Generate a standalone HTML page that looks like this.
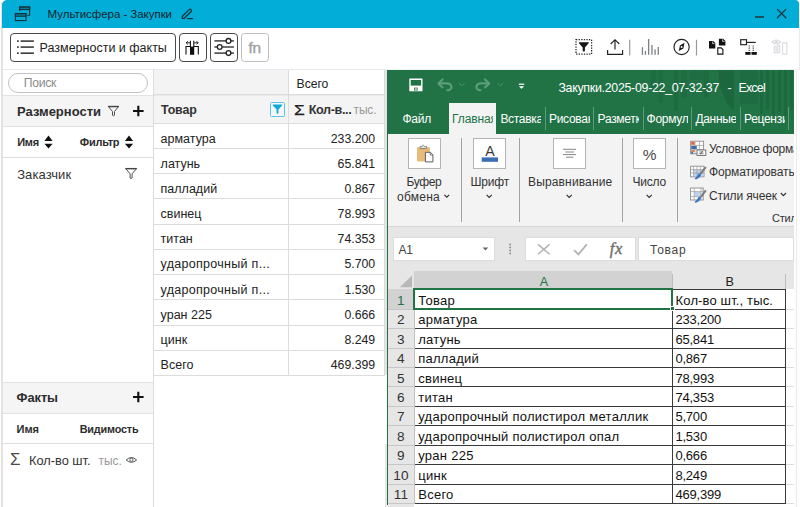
<!DOCTYPE html>
<html lang="ru">
<head>
<meta charset="utf-8">
<title>Мультисфера - Закупки</title>
<style>
*{box-sizing:border-box;margin:0;padding:0}
html,body{width:800px;height:507px;overflow:hidden;background:#fff}
body{font-family:"Liberation Sans","DejaVu Sans",sans-serif;color:#222;position:relative}
#app{position:absolute;left:0;top:0;width:800px;height:507px;overflow:hidden;background:#fff}
.abs{position:absolute}
.t{position:absolute;white-space:nowrap;line-height:1}
/* window */
#edge{left:1px;top:2px;width:1.5px;height:505px;background:#e6e2e2}
#titlebar{left:2px;top:0;width:797px;height:28px;background:#02aed7;border-radius:5px 4px 0 0}
#toolbar{left:3px;top:28px;width:382px;height:41.7px;background:#fff;border-bottom:1px solid #e4eaef}
.btn{position:absolute;top:33px;height:29px;border:1.5px solid #4a4a4a;border-radius:4px;background:#fff}
/* left panel */
#lp{left:3px;top:69.7px;width:150px;height:438px;background:#fff}
.hdr{position:absolute;left:3px;width:150px;background:#f5f5f5;border-top:1px solid #e2e2e2;border-bottom:1px solid #e2e2e2}
</style>
</head>
<body>
<div id="app">
<div id="edge" class="abs"></div>
<div id="titlebar" class="abs"></div>
<div id="toolbar" class="abs"></div>
<div class="abs" style="left:385px;top:68.7px;width:414px;height:1px;background:#eff3f6"></div>
<div class="abs" style="left:799px;top:28px;width:1px;height:479px;background:#e6eef2"></div>
<section id="titlebar-content">
<svg class="abs" style="left:13px;top:5px" width="20" height="18" viewBox="13 5 20 18" fill="none" stroke="#17343e" stroke-width="1.15">
<rect x="15.4" y="13.6" width="10.6" height="7"/>
<rect x="15.4" y="13.6" width="10.6" height="2.6" fill="#17343e" fill-opacity="0.35"/>
<path d="M19.7 11 V7 H29.6 V15.2 H27.4"/>
<rect x="19.7" y="7" width="9.9" height="2.5" fill="#17343e" fill-opacity="0.35"/>
</svg>
<svg class="abs" style="left:179px;top:6px" width="18" height="16" viewBox="179 6 18 16" fill="none" stroke="#17343e" stroke-width="1.3" stroke-linecap="round" stroke-linejoin="round">
<path d="M189.3 9.6 L182.4 16.3 L182.2 18.4 L184.3 18.3 L191.2 11.5 Q192 10.4 191 9.6 Q190.1 8.9 189.3 9.6 Z"/>
<line x1="187.6" y1="18.6" x2="192.6" y2="18.6"/>
</svg>
<div class="abs" style="left:755px;top:16px;width:8.8px;height:1.8px;background:#1b4f5e"></div>
<svg class="abs" style="left:775px;top:7px" width="14" height="14" viewBox="775 7 14 14" stroke="#17343e" stroke-width="1.3" stroke-linecap="round">
<line x1="777.4" y1="9.4" x2="785.8" y2="17.8"/><line x1="785.8" y1="9.4" x2="777.4" y2="17.8"/>
</svg>
<div class="t" style="left:47.6px;top:8px;line-height:12px;font-size:11.5px;letter-spacing:-0.04px;color:#0f252d;">Мультисфера - Закупки</div>
</section>
<section id="toolbar-content">
<div class="btn" style="left:10px;width:166px"></div>
<div class="btn" style="left:179px;width:28px"></div>
<div class="btn" style="left:209.5px;width:28px"></div>
<div class="btn" style="left:241px;width:27.5px;border-color:#bdbdbd;border-width:1.5px;border-radius:3.5px"></div>
<!-- list icon -->
<svg class="abs" style="left:16px;top:38px" width="20" height="18" viewBox="16 38 20 18" fill="#3c3c3c">
<rect x="17" y="40.3" width="1.8" height="1.6"/><rect x="20.6" y="40.3" width="13.3" height="1.6"/>
<rect x="17" y="46.3" width="1.8" height="1.6"/><rect x="20.6" y="46.3" width="13.3" height="1.6"/>
<rect x="17" y="52.4" width="1.8" height="1.6"/><rect x="20.6" y="52.4" width="13.3" height="1.6"/>
</svg>
<!-- column width icon -->
<svg class="abs" style="left:183px;top:38px" width="20" height="20" viewBox="183 38 20 20" fill="none" stroke="#111" stroke-width="1.1">
<path d="M186 54.6 V46.5 H190.2"/>
<path d="M198.3 54.6 V46.5 H194"/>
<rect x="190" y="46.6" width="4.2" height="8.2" fill="#111" stroke="none"/>
<line x1="190.4" y1="40.8" x2="190.4" y2="47"/><line x1="193.8" y1="40.8" x2="193.8" y2="47"/>
<path d="M190 42.8 H186.2 M187.8 41.2 L186.2 42.8 L187.8 44.4" stroke-width="0.9"/>
<path d="M194.2 42.8 H198.2 M196.6 41.2 L198.2 42.8 L196.6 44.4" stroke-width="0.9"/>
</svg>
<!-- sliders icon -->
<svg class="abs" style="left:213px;top:37px" width="22" height="20" viewBox="213 37 22 20" fill="#fff" stroke="#222" stroke-width="1.3">
<line x1="214.4" y1="40.9" x2="233.9" y2="40.9"/><line x1="214.4" y1="47" x2="233.9" y2="47"/><line x1="214.4" y1="53.1" x2="233.9" y2="53.1"/>
<circle cx="228.5" cy="40.9" r="2.4"/><circle cx="219.7" cy="47" r="2.4"/><circle cx="228.5" cy="53.1" r="2.4"/>
</svg>
<!-- right icons -->
<svg class="abs" style="left:572px;top:36px" width="220" height="22" viewBox="572 36 220 22" fill="none">
<rect x="576" y="39.7" width="15.6" height="14.4" stroke="#222" stroke-width="1.25" stroke-dasharray="1.3 1.3"/>
<path d="M579.2 42.2 H588.4 Q589.2 42.5 588.6 43.3 L584.9 47.4 V51 Q583.8 52.2 582.7 51 V47.4 L579 43.3 Q578.4 42.5 579.2 42.2 Z" fill="#151515"/>
<path d="M607.6 50 V54.3 H622.6 V50" stroke="#222" stroke-width="1.15"/>
<path d="M615 49.6 V39.8 M610.7 44 L615 39.7 L619.3 44" stroke="#222" stroke-width="1.15"/>
<line x1="629.7" y1="39.7" x2="629.7" y2="55.5" stroke="#9a9a9a" stroke-width="1.2"/>
<g fill="#7b7f86">
<rect x="641.8" y="47.2" width="1.3" height="7.6"/><rect x="644.8" y="51" width="1.3" height="3.8"/><rect x="648" y="39" width="1.3" height="15.8"/><rect x="651.3" y="45" width="1.3" height="9.8"/><rect x="654.4" y="49.4" width="1.3" height="5.4"/><rect x="657.6" y="47" width="1.3" height="7.8"/>
</g>
<circle cx="681.6" cy="46.95" r="7.6" stroke="#222" stroke-width="1.15"/>
<path d="M684.5 42.8 L683.4 48.4 L678.8 51.1 L679.9 45.5 Z" fill="#1a1a1a"/>
<circle cx="681.6" cy="46.95" r="0.95" fill="#fff"/>
<line x1="696.5" y1="39.8" x2="696.5" y2="55.5" stroke="#9a9a9a" stroke-width="1.2"/>
<path d="M709 41 H713.2 L715.3 43.1 V48.6 H709 Z" fill="#111"/>
<path d="M712.6 41.6 V43.6 H714.6" stroke="#fff" stroke-width="0.7" fill="none"/>
<path d="M718.9 38.8 H723.2 L725.4 41 V45.6 H718.9 Z" fill="#111"/>
<path d="M722.6 39.4 V41.4 H724.6" stroke="#fff" stroke-width="0.7" fill="none"/>
<path d="M717.8 47.9 H721.2 L722.9 49.6 V54.1 H717.8 Z" stroke="#111" stroke-width="1.1" fill="#fff"/>
<rect x="740.7" y="39.7" width="5.8" height="5" stroke="#222" stroke-width="1.15"/>
<line x1="746.6" y1="42.4" x2="755.8" y2="42.4" stroke="#222" stroke-width="1.15"/>
<line x1="749.2" y1="45.4" x2="749.2" y2="51" stroke="#3d2a2a" stroke-width="1.1" stroke-dasharray="1.1 1.1"/>
<line x1="753.2" y1="45.4" x2="753.2" y2="51" stroke="#3d2a2a" stroke-width="1.1" stroke-dasharray="1.1 1.1"/>
<rect x="745.3" y="52" width="5.3" height="2.8" fill="#111"/><rect x="751.5" y="52" width="5.3" height="2.8" fill="#111"/>
<g stroke="#d9dbde" stroke-width="1.1">
<path d="M772 42 Q776.2 38 780.6 42 Q776.2 46 772 42 Z"/>
<circle cx="776.3" cy="42" r="1" fill="#d9dbde"/>
<rect x="774.2" y="46.4" width="1.9" height="6.4"/><rect x="777.8" y="45.4" width="1.9" height="7.4"/><rect x="782.6" y="42.8" width="4.2" height="11.2"/>
</g>
</svg>
<div class="t" style="left:39.6px;top:41px;line-height:14px;font-size:12.5px;">Размерности и факты</div>
<div class="t" style="left:248.4px;top:39px;line-height:17px;font-size:15.5px;letter-spacing:-0.27px;color:#9e9e9e;-webkit-text-stroke:0.35px #9e9e9e;">fn</div>
</section>
<section id="side-panel">
<div id="lp" class="abs"></div>
<div class="abs" style="left:7.5px;top:73px;width:140px;height:20px;border:1px solid #c2c2c2;border-radius:10px;background:#fff"></div>
<div class="hdr" style="top:94.5px;height:32.5px"></div>
<div class="abs" style="left:3px;top:156.7px;width:150px;height:1px;background:#dedede"></div>
<div class="hdr" style="top:382px;height:31.6px"></div>
<div class="abs" style="left:3px;top:443px;width:150px;height:1px;background:#dedede"></div>
<svg class="abs" style="left:3px;top:96px" width="150" height="100" viewBox="3 96 150 100" fill="none">
<path d="M108.5 106.6 H118.5 L114.5 111.5 V115.3 Q113.5 116.3 112.5 115.3 V111.5 Z" stroke="#505050" stroke-width="1"/>
<line x1="108.2" y1="106.5" x2="118.8" y2="106.5" stroke="#444" stroke-width="1.4"/>
<path d="M133 111 H143.6 M138.3 105.8 V116.2" stroke="#111" stroke-width="2.1"/>
<path d="M44.4 141 L48.5 135.4 L52.6 141 Z M44.4 143.8 L48.5 148.4 L52.6 143.8 Z" fill="#111"/>
<path d="M124.9 141 L129 135.4 L133.1 141 Z M124.9 143.8 L129 148.4 L133.1 143.8 Z" fill="#111"/>
<path d="M125.8 168.7 H136.4 L132.1 173.8 V178 Q131.1 179 130.1 178 V173.8 Z" stroke="#505050" stroke-width="1"/>
<line x1="125.4" y1="168.6" x2="136.8" y2="168.6" stroke="#444" stroke-width="1.3"/>
</svg>
<svg class="abs" style="left:3px;top:384px" width="150" height="90" viewBox="3 384 150 90" fill="none">
<path d="M133 397 H143.6 M138.3 391.8 V402.2" stroke="#111" stroke-width="2.1"/>
<path d="M126.2 460 Q131.4 455 136.6 460 Q131.4 464.6 126.2 460 Z" stroke="#555" stroke-width="1"/>
<circle cx="131.4" cy="459.8" r="1.6" stroke="#555" stroke-width="0.9"/>
</svg>
<div class="t" style="left:23.7px;top:76px;line-height:14px;font-size:12.2px;letter-spacing:-0.30px;color:#8a8a8a;">Поиск</div>
<div class="t" style="left:17.0px;top:104px;line-height:15px;font-size:13px;font-weight:700;color:#2c2c2c;">Размерности</div>
<div class="t" style="left:17.2px;top:136px;line-height:12px;font-size:11px;letter-spacing:-0.29px;font-weight:700;color:#2c2c2c;">Имя</div>
<div class="t" style="left:79.8px;top:136px;line-height:12px;font-size:11px;letter-spacing:-0.26px;font-weight:700;color:#2c2c2c;">Фильтр</div>
<div class="t" style="left:17.2px;top:167px;line-height:15px;font-size:13px;letter-spacing:0.08px;color:#333;">Заказчик</div>
<div class="t" style="left:16.6px;top:390px;line-height:15px;font-size:12.8px;letter-spacing:-0.05px;font-weight:700;color:#2c2c2c;">Факты</div>
<div class="t" style="left:16.6px;top:423px;line-height:12px;font-size:11px;letter-spacing:-0.09px;font-weight:700;color:#2c2c2c;">Имя</div>
<div class="t" style="left:79.7px;top:423px;line-height:12px;font-size:10.8px;letter-spacing:-0.15px;font-weight:700;color:#2c2c2c;">Видимость</div>
<div class="t" style="left:10.2px;top:451px;line-height:17px;font-size:15.8px;color:#4a4a4a;transform:scaleX(1.07);transform-origin:0 0;">Σ</div>
<div class="t" style="left:29.0px;top:453px;line-height:15px;font-size:12.8px;color:#333;">Кол-во шт.</div>
<div class="t" style="left:98.5px;top:454px;line-height:14px;font-size:12px;letter-spacing:-0.07px;color:#999;">тыс.</div>
</section>
<section id="pivot-table">
<div class="abs" style="left:153.6px;top:69.5px;width:134.6px;height:24.8px;background:#f3f3f3"></div>
<div class="abs" style="left:153.6px;top:96.2px;width:230.20000000000002px;height:27.2px;background:#f4f4f4"></div>
<div class="abs" style="left:153.6px;top:94.2px;width:231.2px;height:1px;background:#dcdcdc"></div>
<div class="abs" style="left:153.6px;top:123.0px;width:231.2px;height:1px;background:#dcdcdc"></div>
<div class="abs" style="left:153.6px;top:148.0px;width:231.2px;height:1px;background:#dcdcdc"></div>
<div class="abs" style="left:153.6px;top:173.0px;width:231.2px;height:1px;background:#dcdcdc"></div>
<div class="abs" style="left:153.6px;top:198.0px;width:231.2px;height:1px;background:#dcdcdc"></div>
<div class="abs" style="left:153.6px;top:224.0px;width:231.2px;height:1px;background:#dcdcdc"></div>
<div class="abs" style="left:153.6px;top:249.0px;width:231.2px;height:1px;background:#dcdcdc"></div>
<div class="abs" style="left:153.6px;top:274.0px;width:231.2px;height:1px;background:#dcdcdc"></div>
<div class="abs" style="left:153.6px;top:299.0px;width:231.2px;height:1px;background:#dcdcdc"></div>
<div class="abs" style="left:153.6px;top:325.0px;width:231.2px;height:1px;background:#dcdcdc"></div>
<div class="abs" style="left:153.6px;top:350.0px;width:231.2px;height:1px;background:#dcdcdc"></div>
<div class="abs" style="left:153.6px;top:375.0px;width:231.2px;height:1px;background:#dcdcdc"></div>
<div class="abs" style="left:153.6px;top:95.4px;width:231.2px;height:1px;background:#e9e9e9"></div>
<div class="abs" style="left:153.0px;top:69.5px;width:1px;height:438.0px;background:#dcdcdc"></div>
<div class="abs" style="left:287.7px;top:69.5px;width:1px;height:306.5px;background:#dcdcdc"></div>
<div class="abs" style="left:383.8px;top:69.5px;width:1px;height:306.5px;background:#dcdcdc"></div>
<div class="abs" style="left:385px;top:69.5px;width:2px;height:305.5px;background:#e3e3e3"></div>
<div class="abs" style="left:384.6px;top:444px;width:2.4px;height:63px;background:#e7e7e7"></div>
<div class="abs" style="left:270px;top:102px;width:15px;height:15px;border:1.3px solid #5cc3e6;background:#f6f6f6;border-radius:1.5px"></div>
<svg class="abs" style="left:270px;top:102px" width="15" height="15" viewBox="270 102 15 15"><path d="M273.2 104.4 H281.8 Q282.6 104.6 282.1 105.4 L278.4 109.6 V113.2 Q277.5 114.2 276.6 113.2 V109.6 L272.9 105.4 Q272.4 104.6 273.2 104.4 Z" fill="#0fa9d8"/></svg>
<div class="t" style="left:296.6px;top:77px;line-height:14px;font-size:12.2px;letter-spacing:-0.07px;">Всего</div>
<div class="t" style="left:161.0px;top:103px;line-height:14px;font-size:12.4px;letter-spacing:-0.14px;font-weight:700;color:#333;">Товар</div>
<div class="t" style="left:293.6px;top:102px;line-height:16px;font-size:14.5px;transform:scaleX(1.2);transform-origin:0 0;-webkit-text-stroke:0.25px #222;">Σ</div>
<div class="t" style="left:308.7px;top:103px;line-height:14px;font-size:12.6px;letter-spacing:-0.35px;font-weight:700;color:#333;">Кол-в...</div>
<div class="t" style="left:353.6px;top:103px;line-height:14px;font-size:12px;letter-spacing:-0.17px;color:#999;">тыс.</div>
<div class="t" style="left:160.6px;top:132px;line-height:14px;font-size:12.5px;">арматура</div>
<div class="t" style="right:424.8px;top:132px;line-height:14px;font-size:12.3px;">233.200</div>
<div class="t" style="left:160.6px;top:157px;line-height:14px;font-size:12.5px;">латунь</div>
<div class="t" style="right:424.8px;top:157px;line-height:14px;font-size:12.3px;">65.841</div>
<div class="t" style="left:160.6px;top:182px;line-height:14px;font-size:12.5px;">палладий</div>
<div class="t" style="right:424.8px;top:182px;line-height:14px;font-size:12.3px;">0.867</div>
<div class="t" style="left:160.6px;top:207px;line-height:14px;font-size:12.5px;">свинец</div>
<div class="t" style="right:424.8px;top:207px;line-height:14px;font-size:12.3px;">78.993</div>
<div class="t" style="left:160.6px;top:232px;line-height:14px;font-size:12.5px;">титан</div>
<div class="t" style="right:424.8px;top:232px;line-height:14px;font-size:12.3px;">74.353</div>
<div class="t" style="left:160.6px;top:257px;line-height:14px;font-size:12.5px;letter-spacing:0.29px;">ударопрочный п...</div>
<div class="t" style="right:424.8px;top:257px;line-height:14px;font-size:12.3px;">5.700</div>
<div class="t" style="left:160.6px;top:283px;line-height:14px;font-size:12.5px;letter-spacing:0.29px;">ударопрочный п...</div>
<div class="t" style="right:424.8px;top:283px;line-height:14px;font-size:12.3px;">1.530</div>
<div class="t" style="left:160.6px;top:308px;line-height:14px;font-size:12.5px;">уран 225</div>
<div class="t" style="right:424.8px;top:308px;line-height:14px;font-size:12.3px;">0.666</div>
<div class="t" style="left:160.6px;top:333px;line-height:14px;font-size:12.5px;">цинк</div>
<div class="t" style="right:424.8px;top:333px;line-height:14px;font-size:12.3px;">8.249</div>
<div class="t" style="left:160.6px;top:358px;line-height:14px;font-size:12.5px;">Всего</div>
<div class="t" style="right:424.8px;top:358px;line-height:14px;font-size:12.3px;">469.399</div>
</section>
<section id="excel-window">
<div class="abs" style="left:387px;top:70.4px;width:407px;height:437px;background:#fff"></div>
<div class="abs" style="left:387px;top:70.4px;width:407px;height:63.4px;background:#217346"></div>
<div class="abs" style="left:651px;top:70.4px;width:5px;height:20px;background:#1e6c41"></div>
<div class="abs" style="left:659px;top:70.4px;width:4px;height:33px;background:#1e6c41"></div>
<div class="abs" style="left:674px;top:70.4px;width:4px;height:41px;background:#1e6b40"></div>
<div class="abs" style="left:681px;top:70.4px;width:6px;height:28px;background:#1e6c41"></div>
<div class="abs" style="left:690px;top:70.4px;width:14px;height:10px;background:#1f6e43"></div>
<div class="abs" style="left:704px;top:70.4px;width:5px;height:27px;background:#1e6b40"></div>
<div class="abs" style="left:740px;top:70.4px;width:18px;height:34px;background:#1e6c41"></div>
<div class="abs" style="left:760px;top:70.4px;width:3px;height:44px;background:#1d693f"></div>
<div class="abs" style="left:766px;top:70.4px;width:3px;height:40px;background:#1d693f"></div>
<div class="abs" style="left:772px;top:70.4px;width:3px;height:46px;background:#1d693f"></div>
<div class="abs" style="left:778px;top:70.4px;width:3px;height:42px;background:#1d693f"></div>
<div class="abs" style="left:784px;top:70.4px;width:3px;height:46px;background:#1d693f"></div>
<div class="abs" style="left:790px;top:70.4px;width:3px;height:40px;background:#1d693f"></div>
<svg class="abs" style="left:715px;top:70px" width="24" height="44" viewBox="715 70 24 44"><path d="M719 70.4 H734 V110 L727 104 L719 84 Z" fill="#1c673d"/></svg>
<div class="abs" style="left:388px;top:133.8px;width:406px;height:92.4px;background:#f3f3f3"></div>
<div class="abs" style="left:449.4px;top:103px;width:46.8px;height:31px;background:#f3f3f3"></div>
<div class="abs" style="left:545px;top:107px;width:1px;height:23px;background:#5d9a78"></div>
<div class="abs" style="left:593.4px;top:107px;width:1px;height:23px;background:#5d9a78"></div>
<div class="abs" style="left:642.6px;top:107px;width:1px;height:23px;background:#5d9a78"></div>
<div class="abs" style="left:691.4px;top:107px;width:1px;height:23px;background:#5d9a78"></div>
<div class="abs" style="left:740px;top:107px;width:1px;height:23px;background:#5d9a78"></div>
<div class="abs" style="left:788.4px;top:107px;width:1px;height:23px;background:#5d9a78"></div>
<div class="abs" style="left:388px;top:226.2px;width:406px;height:45px;background:#e6e6e6"></div>
<div class="abs" style="left:388px;top:226.2px;width:406px;height:1px;background:#d6d6d6"></div>
<div class="abs" style="left:387px;top:70.4px;width:1.2px;height:435px;background:#217346"></div>
<div class="abs" style="left:408px;top:138px;width:32.6px;height:31px;background:#fff;border:1px solid #b4b4b4"></div>
<div class="abs" style="left:473.4px;top:138px;width:32.6px;height:31px;background:#fff;border:1px solid #b4b4b4"></div>
<div class="abs" style="left:553.3px;top:138px;width:32.5px;height:31px;background:#fff;border:1px solid #b4b4b4"></div>
<div class="abs" style="left:633.4px;top:138px;width:32.2px;height:31px;background:#fff;border:1px solid #b4b4b4"></div>
<div class="abs" style="left:461px;top:138.4px;width:1px;height:83.6px;background:#a2a2a2"></div>
<div class="abs" style="left:518.5px;top:138.4px;width:1px;height:83.6px;background:#a2a2a2"></div>
<div class="abs" style="left:621.5px;top:138.4px;width:1px;height:83.6px;background:#a2a2a2"></div>
<div class="abs" style="left:677.4px;top:138.4px;width:1px;height:83.6px;background:#a2a2a2"></div>
<div class="abs" style="left:393px;top:237.4px;width:102px;height:23.4px;background:#fff;border:1px solid #dcdcdc"></div>
<div class="abs" style="left:525.4px;top:237.4px;width:110.2px;height:23.4px;background:#fff;border:1px solid #dcdcdc"></div>
<div class="abs" style="left:638.4px;top:237.4px;width:155.60000000000002px;height:23.4px;background:#fff;border:1px solid #dcdcdc"></div>
<div class="abs" style="left:388px;top:271px;width:26px;height:18.19999999999999px;background:#e6e6e6"></div>
<div class="abs" style="left:414px;top:271px;width:258.4px;height:18.19999999999999px;background:#d2d2d2"></div>
<div class="abs" style="left:672.4px;top:271px;width:121.60000000000002px;height:18.19999999999999px;background:#e6e6e6"></div>
<div class="abs" style="left:785px;top:274px;width:1px;height:15.199999999999989px;background:#bdbdbd"></div>
<div class="abs" style="left:672.4px;top:274px;width:1px;height:15.199999999999989px;background:#bdbdbd"></div>
<div class="abs" style="left:388px;top:289.2px;width:26px;height:217.8px;background:#e6e6e6"></div>
<div class="abs" style="left:388px;top:289.2px;width:26px;height:19.43px;background:#d2d2d2"></div>
<div class="abs" style="left:388px;top:308.6px;width:26px;height:1px;background:#c6c6c6"></div>
<div class="abs" style="left:786px;top:308.6px;width:8px;height:1px;background:#dedede"></div>
<div class="abs" style="left:388px;top:328.1px;width:26px;height:1px;background:#c6c6c6"></div>
<div class="abs" style="left:786px;top:328.1px;width:8px;height:1px;background:#dedede"></div>
<div class="abs" style="left:388px;top:347.5px;width:26px;height:1px;background:#c6c6c6"></div>
<div class="abs" style="left:786px;top:347.5px;width:8px;height:1px;background:#dedede"></div>
<div class="abs" style="left:388px;top:366.9px;width:26px;height:1px;background:#c6c6c6"></div>
<div class="abs" style="left:786px;top:366.9px;width:8px;height:1px;background:#dedede"></div>
<div class="abs" style="left:388px;top:386.4px;width:26px;height:1px;background:#c6c6c6"></div>
<div class="abs" style="left:786px;top:386.4px;width:8px;height:1px;background:#dedede"></div>
<div class="abs" style="left:388px;top:405.8px;width:26px;height:1px;background:#c6c6c6"></div>
<div class="abs" style="left:786px;top:405.8px;width:8px;height:1px;background:#dedede"></div>
<div class="abs" style="left:388px;top:425.2px;width:26px;height:1px;background:#c6c6c6"></div>
<div class="abs" style="left:786px;top:425.2px;width:8px;height:1px;background:#dedede"></div>
<div class="abs" style="left:388px;top:444.6px;width:26px;height:1px;background:#c6c6c6"></div>
<div class="abs" style="left:786px;top:444.6px;width:8px;height:1px;background:#dedede"></div>
<div class="abs" style="left:388px;top:464.1px;width:26px;height:1px;background:#c6c6c6"></div>
<div class="abs" style="left:786px;top:464.1px;width:8px;height:1px;background:#dedede"></div>
<div class="abs" style="left:388px;top:483.5px;width:26px;height:1px;background:#c6c6c6"></div>
<div class="abs" style="left:786px;top:483.5px;width:8px;height:1px;background:#dedede"></div>
<div class="abs" style="left:388px;top:502.9px;width:26px;height:1px;background:#c6c6c6"></div>
<div class="abs" style="left:786px;top:502.9px;width:8px;height:1px;background:#dedede"></div>
<div class="abs" style="left:414px;top:308.6px;width:371.6px;height:1px;background:#3a3a3a"></div>
<div class="abs" style="left:414px;top:328.1px;width:371.6px;height:1px;background:#3a3a3a"></div>
<div class="abs" style="left:414px;top:347.5px;width:371.6px;height:1px;background:#3a3a3a"></div>
<div class="abs" style="left:414px;top:366.9px;width:371.6px;height:1px;background:#3a3a3a"></div>
<div class="abs" style="left:414px;top:386.4px;width:371.6px;height:1px;background:#3a3a3a"></div>
<div class="abs" style="left:414px;top:405.8px;width:371.6px;height:1px;background:#3a3a3a"></div>
<div class="abs" style="left:414px;top:425.2px;width:371.6px;height:1px;background:#3a3a3a"></div>
<div class="abs" style="left:414px;top:444.6px;width:371.6px;height:1px;background:#3a3a3a"></div>
<div class="abs" style="left:414px;top:464.1px;width:371.6px;height:1px;background:#3a3a3a"></div>
<div class="abs" style="left:414px;top:483.5px;width:371.6px;height:1px;background:#3a3a3a"></div>
<div class="abs" style="left:414px;top:502.9px;width:371.6px;height:1px;background:#3a3a3a"></div>
<div class="abs" style="left:673px;top:289px;width:112.6px;height:1px;background:#3a3a3a"></div>
<div class="abs" style="left:414px;top:289.2px;width:1px;height:214.7px;background:#c2c2c2"></div>
<div class="abs" style="left:672.4px;top:289.2px;width:1px;height:214.7px;background:#3a3a3a"></div>
<div class="abs" style="left:785px;top:289.2px;width:1px;height:214.7px;background:#3a3a3a"></div>
<div class="abs" style="left:413.4px;top:288px;width:260px;height:22px;border:2px solid #217346"></div>
<div class="abs" style="left:670px;top:306.2px;width:5px;height:5px;background:#217346;border:1px solid #fff"></div>
<svg class="abs" style="left:398px;top:273px" width="16" height="16" viewBox="398 273 16 16"><path d="M412 275.4 V287.2 H399.8 Z" fill="#b8b8b8"/></svg>
<div class="abs" style="left:794px;top:70px;width:6px;height:437px;background:#fdfdfd"></div>
<div class="abs" style="left:795.6px;top:70px;width:1.6px;height:437px;background:#ebebeb"></div>
<svg class="abs" style="left:387px;top:70px" width="407" height="437" viewBox="387 70 407 437" fill="none">
<!-- save -->
<path d="M410 79.2 H421.8 V90.6 H410 Z" stroke="#fff" stroke-width="1.4"/>
<rect x="410" y="85.6" width="11.8" height="5" fill="#fff"/>
<rect x="414.2" y="87.6" width="3.4" height="3" fill="#217346"/>
<rect x="415.4" y="88" width="1.1" height="2.6" fill="#fff"/>
<!-- undo/redo -->
<g stroke="#5c9e7b" stroke-width="2.1" stroke-linecap="round" stroke-linejoin="round">
<path d="M442.6 79.4 L438.4 83.4 L442.6 87.4"/>
<path d="M438.8 83.4 H447 Q451.4 83.8 451.4 87.2 Q451.2 90 447.2 90.2"/>
<path d="M485 79.4 L489.2 83.4 L485 87.4"/>
<path d="M488.8 83.4 H480.6 Q476.4 83.8 476.4 87.2 Q476.6 90 480.6 90.2"/>
</g>
<g stroke="#4f9470" stroke-width="1">
<path d="M459 83.2 L461.8 85.8 L464.6 83.2"/>
<path d="M497.6 83.2 L500.4 85.8 L503.2 83.2"/>
</g>
<rect x="518.8" y="83.6" width="5.4" height="1.2" fill="#fff"/>
<path d="M518.8 86.2 H524.2 L521.5 88.8 Z" fill="#fff"/>
<!-- clipboard -->
<rect x="417" y="147.3" width="12.9" height="14.1" rx="0.8" fill="#e9bb7b"/>
<path d="M420 148.6 V146.6 H421.8 Q423.2 143.8 424.8 146.6 H426.6 V148.6 Z" fill="#efe6d8" stroke="#7c7c7c" stroke-width="0.9"/>
<path d="M425.4 152.3 H430.4 L432.9 154.8 V161.9 H425.4 Z" fill="#fff" stroke="#5e5e5e" stroke-width="1"/>
<path d="M430.2 152.4 V155 H432.8" fill="none" stroke="#5e5e5e" stroke-width="0.8"/>
<!-- A with bar -->
<rect x="481.7" y="157.4" width="16.3" height="4.4" fill="#3b6db5"/>
<!-- align -->
<g stroke="#858585" stroke-width="1">
<line x1="563" y1="149.3" x2="576" y2="149.3"/><line x1="565.4" y1="152" x2="574" y2="152"/><line x1="563" y1="154.6" x2="576" y2="154.6"/><line x1="566" y1="157.2" x2="573.4" y2="157.2"/>
</g>
<!-- chevrons ribbon -->
<g stroke="#333" stroke-width="1.2">
<path d="M444.4 194.8 L446.8 197.2 L449.2 194.8"/>
<path d="M486.6 194.8 L489.2 197.4 L491.8 194.8"/>
<path d="M566.6 194.8 L569.2 197.4 L571.8 194.8"/>
<path d="M646.6 194.8 L649.2 197.4 L651.8 194.8"/>
<path d="M780.8 193 L783.4 195.6 L786 193"/>
</g>
<!-- cond format icons -->
<g>
<rect x="690.6" y="141.2" width="13" height="12.6" fill="#fff" stroke="#8d8d8d" stroke-width="0.9"/>
<path d="M690.6 145.4 H703.6 M690.6 149.6 H703.6 M695 141.2 V153.8 M699.4 141.2 V153.8" stroke="#9a9a9a" stroke-width="0.7"/>
<rect x="691.2" y="141.8" width="3.4" height="3" fill="#e2632d"/>
<rect x="691.2" y="146" width="5.6" height="3" fill="#3b6db5"/>
<rect x="691.2" y="150.2" width="3.4" height="1.6" fill="#e2632d"/>
<rect x="691.2" y="151.8" width="2" height="2" fill="#3b6db5"/>
<rect x="697" y="150" width="8.8" height="5.4" fill="#fff" stroke="#666" stroke-width="0.9"/>
<path d="M699.4 152 H703.4 M699.4 153.6 H703.4 M702.6 151 L700.4 154.6" stroke="#555" stroke-width="0.7"/>
</g>
<g>
<rect x="690.6" y="166.2" width="13.4" height="10.6" fill="#fff" stroke="#8d8d8d" stroke-width="0.9"/>
<rect x="693.6" y="169.6" width="9.6" height="6.6" fill="#bcd3ee"/>
<path d="M690.6 169.6 H704 M690.6 173 H704 M693.6 166.2 V176.8 M697 166.2 V176.8 M700.4 166.2 V176.8" stroke="#9a9a9a" stroke-width="0.7"/>
<path d="M705.8 167 L700.8 173.6" stroke="#7a7a7a" stroke-width="2"/>
<path d="M700.8 173.4 Q701.6 177 696.6 179.2 Q694.4 179.4 694.6 178.6 Q698 176 698.4 173.6 Z" fill="#3b78c4"/>
</g>
<g>
<rect x="690.6" y="188" width="12.6" height="12" fill="#fff" stroke="#8d8d8d" stroke-width="0.9"/>
<rect x="694.4" y="191.8" width="6.4" height="4.6" fill="#bcd3ee"/>
<path d="M690.6 191.6 H703.2 M690.6 196.6 H703.2 M694.2 188 V200 M701 188 V200" stroke="#9a9a9a" stroke-width="0.7"/>
<path d="M705.8 190.4 L700.8 197" stroke="#7a7a7a" stroke-width="2"/>
<path d="M700.8 196.8 Q701.6 200.4 696.6 202.6 Q694.4 202.8 694.6 202 Q698 199.4 698.4 197 Z" fill="#3b78c4"/>
</g>
<!-- formula bar icons -->
<path d="M482.6 247.4 H488.2 L485.4 250.4 Z" fill="#666"/>
<g fill="#8e8e8e"><rect x="509.3" y="243.6" width="1.7" height="1.7"/><rect x="509.3" y="246.6" width="1.7" height="1.7"/><rect x="509.3" y="249.6" width="1.7" height="1.7"/><rect x="509.3" y="252.6" width="1.7" height="1.7"/></g>
<path d="M538 244.4 L549.6 254.2 M549.6 244.4 L538 254.2" stroke="#b2b2b2" stroke-width="1.5"/>
<path d="M574.2 250.2 L578.4 254.4 L586.8 244.4" stroke="#b2b2b2" stroke-width="1.8"/>
</svg>
<div class="t" style="left:558.4px;top:81px;line-height:14px;font-size:12.4px;letter-spacing:-0.29px;color:#fff;">Закупки.2025-09-22_07-32-37</div>
<div class="t" style="left:727.4px;top:81px;line-height:14px;font-size:12.4px;color:#fff;">-</div>
<div class="t" style="left:738.4px;top:81px;line-height:14px;font-size:12.4px;letter-spacing:-0.74px;color:#fff;">Excel</div>
<div class="t" style="left:402.4px;top:112px;line-height:14px;font-size:12px;letter-spacing:-0.23px;color:#fff;">Файл</div>
<div class="t" style="left:452.0px;top:112px;line-height:14px;font-size:12px;color:#217346;width:41px;overflow:hidden;letter-spacing:-0.1px;">Главная</div>
<div class="t" style="left:500.4px;top:112px;line-height:14px;font-size:12px;color:#fff;width:41px;overflow:hidden;letter-spacing:-0.3px;">Вставка</div>
<div class="t" style="left:549.0px;top:112px;line-height:14px;font-size:12px;color:#fff;width:41px;overflow:hidden;letter-spacing:-0.3px;">Рисование</div>
<div class="t" style="left:597.6px;top:112px;line-height:14px;font-size:12px;color:#fff;width:41px;overflow:hidden;letter-spacing:-0.3px;">Разметка</div>
<div class="t" style="left:646.6px;top:112px;line-height:14px;font-size:12px;color:#fff;width:41px;overflow:hidden;letter-spacing:-0.3px;">Формулы</div>
<div class="t" style="left:695.4px;top:112px;line-height:14px;font-size:12px;color:#fff;width:41px;overflow:hidden;letter-spacing:-0.3px;">Данные</div>
<div class="t" style="left:744.0px;top:112px;line-height:14px;font-size:12px;color:#fff;width:41px;overflow:hidden;letter-spacing:-0.3px;">Рецензирование</div>
<div class="t" style="left:406.6px;top:175px;line-height:14px;font-size:12px;letter-spacing:-0.38px;color:#333;">Буфер</div>
<div class="t" style="left:397.0px;top:190px;line-height:14px;font-size:12px;letter-spacing:0.25px;color:#333;">обмена</div>
<div class="t" style="left:470.6px;top:175px;line-height:14px;font-size:12px;letter-spacing:-0.22px;color:#333;">Шрифт</div>
<div class="t" style="left:528.0px;top:175px;line-height:14px;font-size:12px;letter-spacing:0.15px;color:#333;">Выравнивание</div>
<div class="t" style="left:632.4px;top:175px;line-height:14px;font-size:12px;letter-spacing:-0.18px;color:#333;">Число</div>
<div class="t" style="left:485.2px;top:143px;line-height:16px;font-size:14.2px;letter-spacing:0.13px;color:#3a3a3a;">A</div>
<div class="t" style="left:642.8px;top:146px;line-height:17px;font-size:15.4px;color:#4a4a4a;">%</div>
<div class="t" style="left:709.0px;top:142px;line-height:14px;font-size:12px;color:#333;width:85px;overflow:hidden;letter-spacing:-0.3px;">Условное форматирование</div>
<div class="t" style="left:709.0px;top:165px;line-height:14px;font-size:12px;color:#333;width:85px;overflow:hidden;letter-spacing:-0.12px;">Форматировать как таблицу</div>
<div class="t" style="left:709.0px;top:189px;line-height:14px;font-size:12px;letter-spacing:-0.12px;color:#333;">Стили ячеек</div>
<div class="t" style="left:772.0px;top:212px;line-height:12px;font-size:11px;color:#333;width:22px;overflow:hidden;letter-spacing:-0.2px;">Стили</div>
<div class="t" style="left:398.4px;top:243px;line-height:14px;font-size:12px;letter-spacing:-0.04px;color:#444;">A1</div>
<div class="t" style="left:609.8px;top:239px;line-height:19px;font-size:16.5px;letter-spacing:0.54px;color:#6e6e6e;font-family:'Liberation Serif','DejaVu Serif',serif;font-style:italic;-webkit-text-stroke:0.4px #6e6e6e;">fx</div>
<div class="t" style="left:650.0px;top:243px;line-height:14px;font-size:12px;letter-spacing:0.75px;color:#444;">Товар</div>
<div class="t" style="left:539.8px;top:275px;line-height:14px;font-size:12.6px;color:#217346;">A</div>
<div class="t" style="left:725.4px;top:275px;line-height:14px;font-size:12.6px;">B</div>
<div class="t" style="left:418.2px;top:293px;line-height:15px;font-size:13px;color:#111;letter-spacing:0.27px;">Товар</div>
<div class="t" style="left:675.6px;top:293px;line-height:15px;font-size:13px;letter-spacing:0.14px;color:#111;">Кол-во шт., тыс.</div>
<div class="t" style="top:293px;line-height:15px;font-size:13.6px;color:#217346;left:388px;width:26px;text-align:center;letter-spacing:0.3px;">1</div>
<div class="t" style="left:418.2px;top:312px;line-height:15px;font-size:13px;color:#111;letter-spacing:0.27px;">арматура</div>
<div class="t" style="left:675.4px;top:312px;line-height:15px;font-size:13px;color:#111;letter-spacing:-0.2px;">233,200</div>
<div class="t" style="top:312px;line-height:15px;font-size:13.6px;color:#333;left:388px;width:26px;text-align:center;letter-spacing:0.3px;">2</div>
<div class="t" style="left:418.2px;top:332px;line-height:15px;font-size:13px;color:#111;letter-spacing:0.27px;">латунь</div>
<div class="t" style="left:675.4px;top:332px;line-height:15px;font-size:13px;color:#111;letter-spacing:-0.2px;">65,841</div>
<div class="t" style="top:332px;line-height:15px;font-size:13.6px;color:#333;left:388px;width:26px;text-align:center;letter-spacing:0.3px;">3</div>
<div class="t" style="left:418.2px;top:351px;line-height:15px;font-size:13px;color:#111;letter-spacing:0.27px;">палладий</div>
<div class="t" style="left:675.4px;top:351px;line-height:15px;font-size:13px;color:#111;letter-spacing:-0.2px;">0,867</div>
<div class="t" style="top:351px;line-height:15px;font-size:13.6px;color:#333;left:388px;width:26px;text-align:center;letter-spacing:0.3px;">4</div>
<div class="t" style="left:418.2px;top:371px;line-height:15px;font-size:13px;color:#111;letter-spacing:0.27px;">свинец</div>
<div class="t" style="left:675.4px;top:371px;line-height:15px;font-size:13px;color:#111;letter-spacing:-0.2px;">78,993</div>
<div class="t" style="top:371px;line-height:15px;font-size:13.6px;color:#333;left:388px;width:26px;text-align:center;letter-spacing:0.3px;">5</div>
<div class="t" style="left:418.2px;top:390px;line-height:15px;font-size:13px;color:#111;letter-spacing:0.27px;">титан</div>
<div class="t" style="left:675.4px;top:390px;line-height:15px;font-size:13px;color:#111;letter-spacing:-0.2px;">74,353</div>
<div class="t" style="top:390px;line-height:15px;font-size:13.6px;color:#333;left:388px;width:26px;text-align:center;letter-spacing:0.3px;">6</div>
<div class="t" style="left:418.2px;top:409px;line-height:15px;font-size:13px;color:#111;letter-spacing:0.27px;">ударопрочный полистирол металлик</div>
<div class="t" style="left:675.4px;top:409px;line-height:15px;font-size:13px;color:#111;letter-spacing:-0.2px;">5,700</div>
<div class="t" style="top:409px;line-height:15px;font-size:13.6px;color:#333;left:388px;width:26px;text-align:center;letter-spacing:0.3px;">7</div>
<div class="t" style="left:418.2px;top:429px;line-height:15px;font-size:13px;color:#111;letter-spacing:0.27px;">ударопрочный полистирол опал</div>
<div class="t" style="left:675.4px;top:429px;line-height:15px;font-size:13px;color:#111;letter-spacing:-0.2px;">1,530</div>
<div class="t" style="top:429px;line-height:15px;font-size:13.6px;color:#333;left:388px;width:26px;text-align:center;letter-spacing:0.3px;">8</div>
<div class="t" style="left:418.2px;top:448px;line-height:15px;font-size:13px;color:#111;letter-spacing:0.27px;">уран 225</div>
<div class="t" style="left:675.4px;top:448px;line-height:15px;font-size:13px;color:#111;letter-spacing:-0.2px;">0,666</div>
<div class="t" style="top:448px;line-height:15px;font-size:13.6px;color:#333;left:388px;width:26px;text-align:center;letter-spacing:0.3px;">9</div>
<div class="t" style="left:418.2px;top:468px;line-height:15px;font-size:13px;color:#111;letter-spacing:0.27px;">цинк</div>
<div class="t" style="left:675.4px;top:468px;line-height:15px;font-size:13px;color:#111;letter-spacing:-0.2px;">8,249</div>
<div class="t" style="top:468px;line-height:15px;font-size:13.6px;color:#333;left:388px;width:26px;text-align:center;letter-spacing:0.3px;">10</div>
<div class="t" style="left:418.2px;top:487px;line-height:15px;font-size:13px;color:#111;letter-spacing:0.27px;">Всего</div>
<div class="t" style="left:675.4px;top:487px;line-height:15px;font-size:13px;color:#111;letter-spacing:-0.2px;">469,399</div>
<div class="t" style="top:487px;line-height:15px;font-size:13.6px;color:#333;left:388px;width:26px;text-align:center;letter-spacing:0.3px;">11</div>
</section>

</div>
</body>
</html>
